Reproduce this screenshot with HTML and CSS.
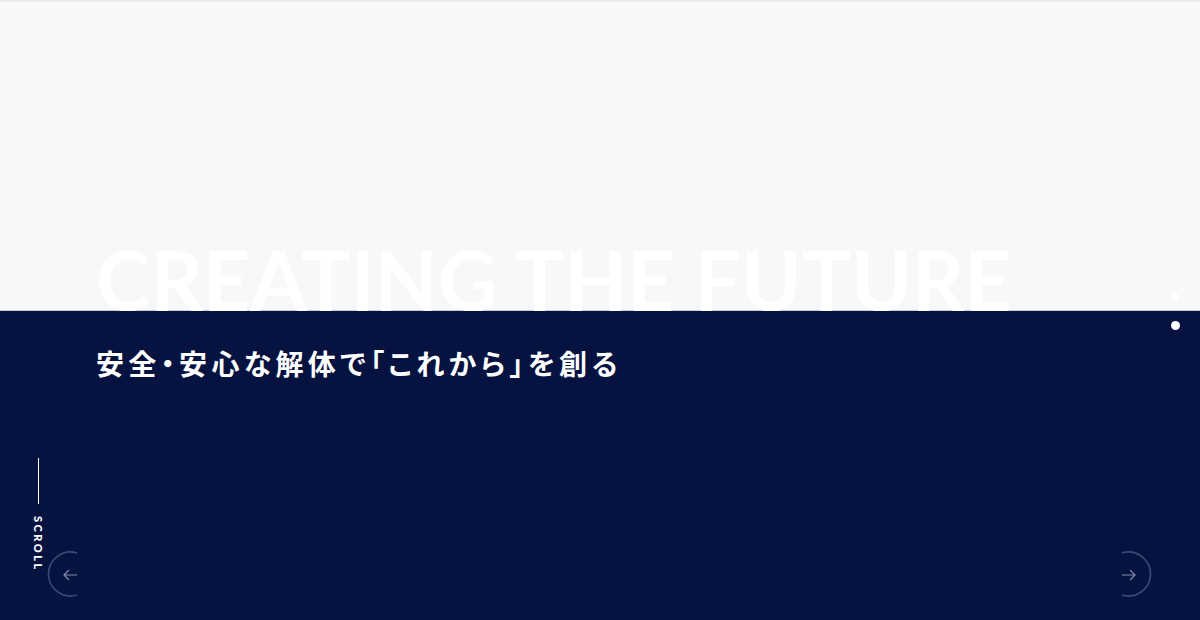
FILE: index.html
```html
<!DOCTYPE html>
<html lang="ja">
<head>
<meta charset="utf-8">
<title>Creating the Future</title>
<link rel="stylesheet" href="styles.css">
</head>
<body>
<main class="hero">
  <section class="hero-top">
    <h1 class="hero-title">CREATING THE FUTURE</h1>
  </section>
  <section class="hero-bottom">
    <p class="hero-catch">安全・安心な解体で「これから」を創る</p>
  </section>

  <div class="pager">
    <span class="pager-dot is-active"></span>
    <span class="pager-dot"></span>
  </div>

  <div class="scroll">
    <span class="scroll-line"></span>
    <span class="scroll-text">SCROLL</span>
  </div>

  <button class="nav nav-prev" aria-label="前へ">
    <svg width="60" height="60" viewBox="0 0 60 60">
      <path d="M36 9 A22 22 0 1 0 36 51" fill="none" stroke="#3e4a73" stroke-width="1.6"/>
      <path d="M36 31 H23 M28 26 L23 31 L28 36" fill="none" stroke="#828ca9" stroke-width="1.2"/>
    </svg>
  </button>
  <button class="nav nav-next" aria-label="次へ">
    <svg width="60" height="60" viewBox="0 0 60 60">
      <path d="M24 9 A22 22 0 1 1 24 51" fill="none" stroke="#3e4a73" stroke-width="1.6"/>
      <path d="M24 31 H37 M32 26 L37 31 L32 36" fill="none" stroke="#828ca9" stroke-width="1.2"/>
    </svg>
  </button>
</main>
</body>
</html>
```
FILE: styles.css
```css
* { box-sizing: border-box; }
html, body {
  margin: 0;
  padding: 0;
  width: 1200px;
  height: 620px;
  overflow: hidden;
}
body {
  font-family: Lato, "Noto Sans CJK JP", sans-serif;
  background: #061340;
}
.hero {
  position: relative;
  width: 1200px;
  height: 620px;
  display: flex;
  flex-direction: column;
}
.hero-top {
  height: 311px;
  flex: none;
  background: #f8f8f8;
  border-top: 2px solid #ececec;
  border-bottom: 1px solid #c9ccd4;
  display: flex;
  align-items: flex-end;
  padding-left: 96px;
}
.hero-title {
  margin: 0 0 -10px;
  font-family: Lato, sans-serif;
  font-weight: 700;
  font-size: 82px;
  line-height: 1;
  color: #ffffff;
  letter-spacing: 0;
  white-space: nowrap;
}
.hero-bottom {
  flex: 1;
  background: #061340;
  padding: 31px 0 0 96px;
}
.hero-catch {
  margin: 0;
  font-family: "Noto Sans CJK JP", sans-serif;
  font-weight: 700;
  font-size: 28px;
  line-height: 42px;
  letter-spacing: 4.35px;
  font-feature-settings: "palt";
  color: #ffffff;
}
.pager {
  position: absolute;
  left: 1165px;
  top: 286px;
  display: flex;
  flex-direction: column;
  align-items: center;
  gap: 14px;
  width: 21px;
}
.pager-dot {
  display: block;
  width: 9px;
  height: 9px;
  border-radius: 50%;
  background: #ffffff;
}
.pager-dot.is-active {
  width: 21px;
  height: 21px;
  border: 1px solid rgba(255,255,255,0.9);
  background: transparent;
  position: relative;
}
.pager-dot.is-active::after {
  content: "";
  position: absolute;
  left: 6px;
  top: 6px;
  width: 7px;
  height: 7px;
  border-radius: 50%;
  background: #ffffff;
}
.scroll {
  position: absolute;
  left: 31px;
  top: 458px;
  width: 14px;
  display: flex;
  flex-direction: column;
  align-items: center;
  gap: 12px;
}
.scroll-line {
  display: block;
  width: 1px;
  height: 46px;
  background: #ffffff;
}
.scroll-text {
  writing-mode: vertical-rl;
  font-family: Lato, sans-serif;
  font-weight: 900;
  font-size: 11px;
  letter-spacing: 2.5px;
  color: #ffffff;
  line-height: 14px;
}
.nav {
  position: absolute;
  top: 544px;
  width: 60px;
  height: 60px;
  padding: 0;
  border: 0;
  background: transparent;
  cursor: pointer;
}
.nav svg { display: block; }
.nav-prev { left: 41px; }
.nav-next { left: 1098px; }
```
